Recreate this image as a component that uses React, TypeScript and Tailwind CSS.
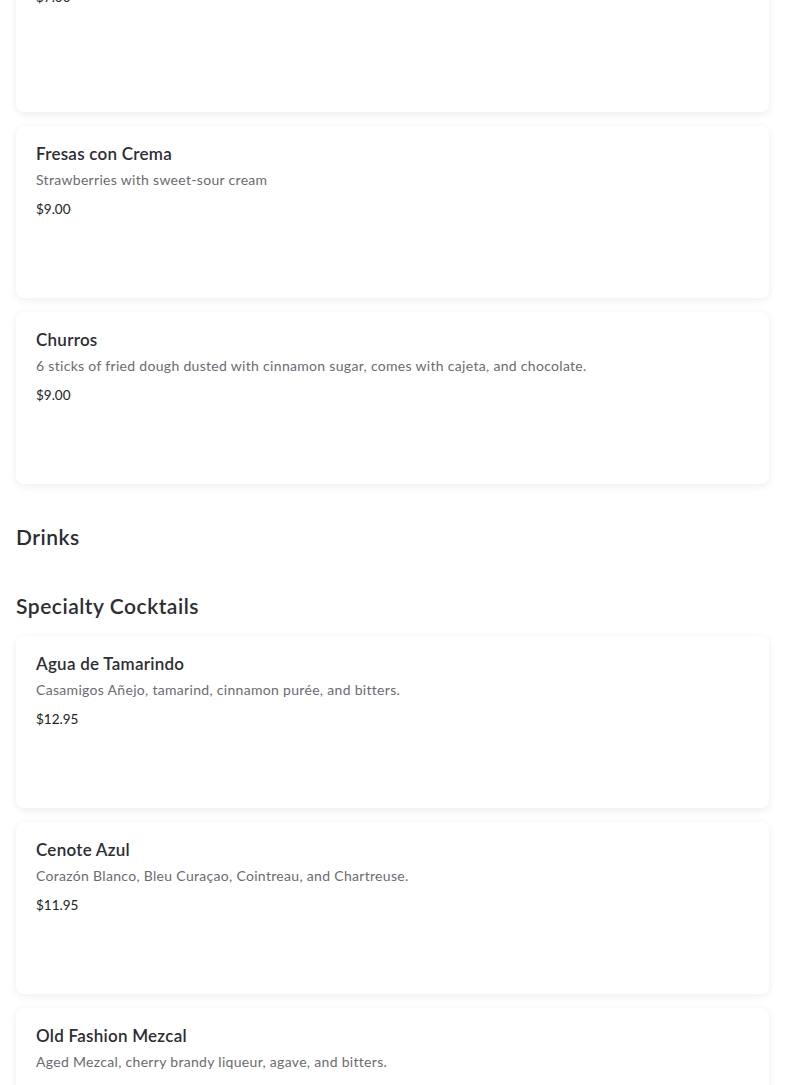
import React from 'react';

type Item = { name: string; description: string; price: string; tall?: boolean };

const desserts: Item[] = [
  { name: 'Flan', description: 'Homemade caramel custard', price: '$7.00', tall: true },
  { name: 'Fresas con Crema', description: 'Strawberries with sweet-sour cream', price: '$9.00' },
  { name: 'Churros', description: '6 sticks of fried dough dusted with cinnamon sugar, comes with cajeta, and chocolate.', price: '$9.00' },
];

const cocktails: Item[] = [
  { name: 'Agua de Tamarindo', description: 'Casamigos Añejo, tamarind, cinnamon purée, and bitters.', price: '$12.95' },
  { name: 'Cenote Azul', description: 'Corazón Blanco, Bleu Curaçao, Cointreau, and Chartreuse.', price: '$11.95' },
  { name: 'Old Fashion Mezcal', description: 'Aged Mezcal, cherry brandy liqueur, agave, and bitters.', price: '$12.95' },
];

const MenuCard = ({ name, description, price, tall }: Item) => (
  <div className={`${tall ? 'h-[198px]' : 'h-[172px]'} bg-white rounded-lg px-5 pt-4 shadow-[0_2px_8px_rgba(0,0,0,0.08)]`}>
    <h3 className="text-[17px] leading-6 font-semibold text-[#2d2d33] tracking-[0.015em]">{name}</h3>
    <p className="mt-0.5 text-[14px] leading-6 text-[#6b6b72] tracking-[0.022em]">{description}</p>
    <p className="mt-1.5 text-[13.5px] leading-[22px] text-[#222226]">{price}</p>
  </div>
);

export default function App() {
  return (
    <div className="min-h-screen bg-white px-4 pb-10 font-['Lato','Liberation_Sans',sans-serif]">
      <div className="-mt-[86px] flex flex-col gap-[14px]">
        {desserts.map((item) => (
          <MenuCard key={item.name} {...item} />
        ))}
      </div>

      <h2 className="mt-[38px] text-[21px] leading-[30px] font-semibold text-[#2d2d33] tracking-[0.025em]">Drinks</h2>

      <h2 className="mt-[39px] text-[21px] leading-[30px] font-semibold text-[#2d2d33] tracking-[0.025em]">Specialty Cocktails</h2>

      <div className="mt-[15px] flex flex-col gap-[14px]">
        {cocktails.map((item) => (
          <MenuCard key={item.name} {...item} />
        ))}
      </div>
    </div>
  );
}
